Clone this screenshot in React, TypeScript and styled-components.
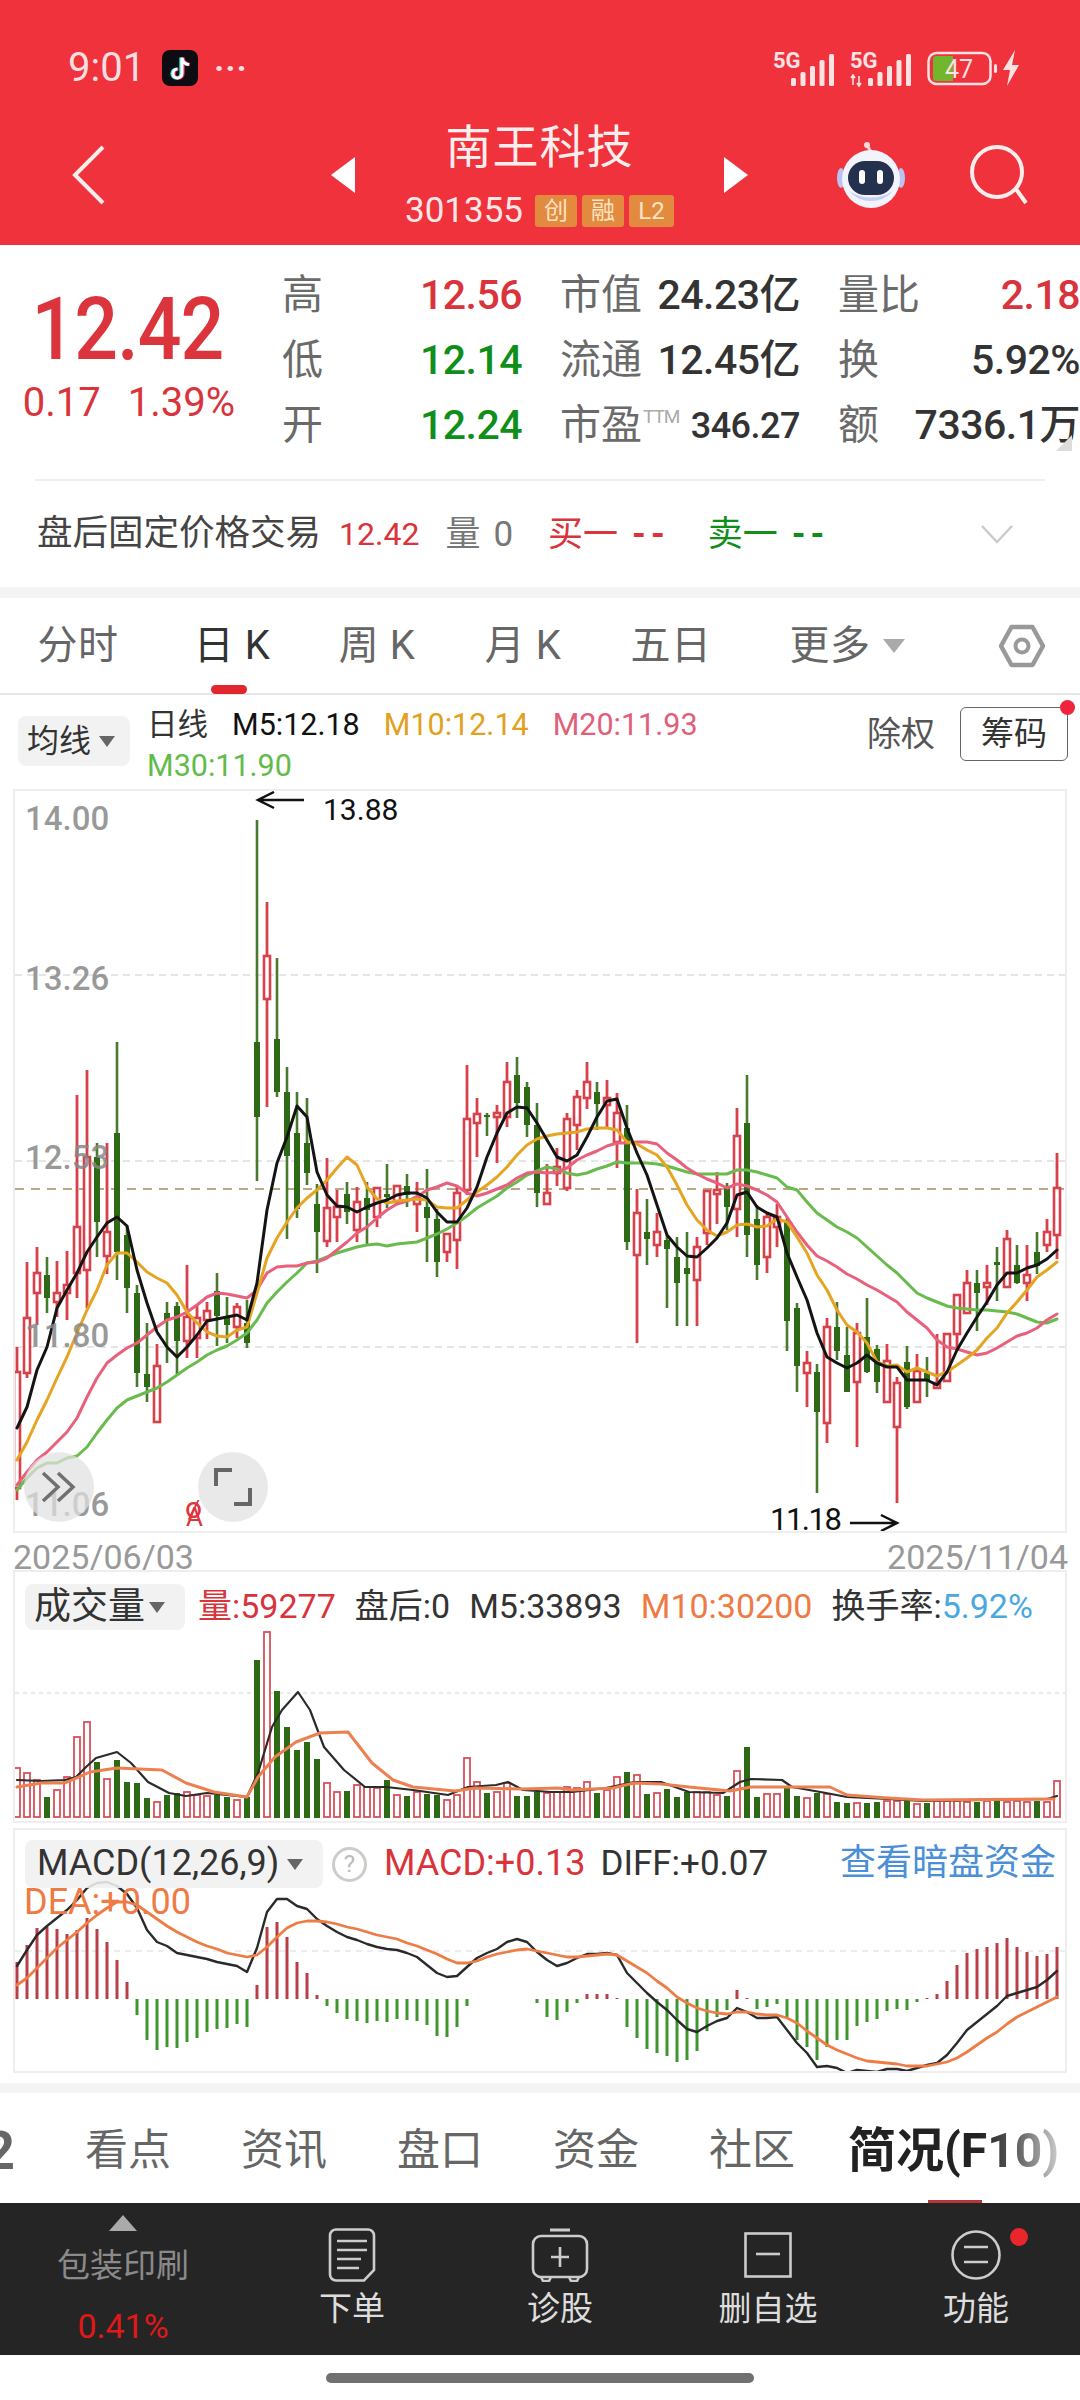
import styled, { createGlobalStyle } from "styled-components";

const SANS = `Roboto, "Noto Sans CJK SC", sans-serif`;
const RED = "#d9333b";
const GREEN = "#0f8f1a";

const GlobalStyle = createGlobalStyle`
  html, body { margin: 0; padding: 0; background: #fff; }
  #root { width: 1080px; height: 2400px; overflow: hidden; }
  * { box-sizing: border-box; }
`;

/* candles: up, high, body top, body bottom, low (page px) */
const candles: [number, number, number, number, number][] = [
  [1,1347,1372,1488,1500],[1,1262,1318,1373,1378],[1,1247,1273,1293,1325],[0,1257,1275,1298,1313],[1,1261,1293,1302,1317],
  [1,1251,1285,1293,1320],[1,1095,1227,1273,1298],[1,1070,1157,1270,1308],[0,1143,1157,1222,1257],[1,1143,1232,1256,1274],
  [0,1042,1133,1252,1280],[0,1225,1235,1288,1313],[0,1285,1293,1373,1387],[0,1323,1374,1387,1402],[1,1344,1366,1422,1422],
  [0,1302,1313,1320,1363],[0,1302,1306,1341,1374],[1,1265,1317,1341,1358],[1,1305,1318,1338,1358],[1,1302,1311,1320,1339],
  [0,1273,1291,1316,1346],[0,1297,1317,1325,1343],[1,1303,1307,1327,1338],[0,1300,1323,1343,1348],[0,820,1042,1117,1181],
  [1,902,956,999,1107],[0,958,1039,1092,1097],[0,1067,1092,1156,1239],[0,1092,1133,1209,1218],[0,1098,1143,1173,1185],
  [0,1184,1204,1232,1273],[1,1158,1208,1241,1247],[1,1190,1207,1217,1242],[0,1182,1194,1212,1224],[1,1187,1202,1230,1242],
  [0,1182,1198,1210,1245],[1,1187,1188,1217,1227],[0,1164,1194,1197,1208],[1,1185,1186,1202,1205],[0,1174,1186,1195,1207],
  [1,1182,1198,1204,1232],[0,1169,1207,1218,1262],[0,1209,1219,1262,1277],[1,1233,1234,1252,1262],[1,1187,1193,1240,1269],
  [1,1065,1119,1190,1195],[1,1098,1114,1123,1157],[0,1113,1115,1117,1136],[1,1105,1113,1117,1163],[1,1062,1082,1117,1127],
  [0,1057,1075,1103,1118],[0,1082,1087,1125,1137],[0,1103,1125,1193,1207],[1,1164,1193,1204,1204],[1,1148,1167,1173,1186],
  [1,1113,1119,1188,1191],[1,1090,1097,1125,1150],[1,1062,1082,1098,1109],[0,1082,1092,1104,1130],[1,1080,1098,1105,1128],
  [1,1093,1113,1142,1168],[0,1105,1128,1242,1250],[1,1189,1213,1255,1343],[0,1199,1232,1239,1265],[1,1213,1232,1245,1257],
  [0,1235,1240,1249,1308],[0,1237,1257,1283,1326],[0,1232,1268,1274,1326],[1,1237,1247,1280,1326],[1,1190,1191,1233,1245],
  [1,1172,1190,1194,1224],[0,1183,1188,1207,1230],[1,1108,1136,1209,1237],[0,1075,1123,1235,1257],[0,1205,1219,1265,1280],
  [1,1212,1217,1257,1273],[1,1204,1217,1227,1247],[0,1218,1220,1321,1351],[0,1303,1308,1366,1392],[1,1351,1363,1373,1407],
  [0,1364,1372,1412,1493],[1,1318,1327,1423,1443],[0,1302,1327,1351,1360],[0,1327,1355,1392,1392],[1,1323,1333,1382,1447],
  [0,1298,1337,1372,1373],[0,1345,1349,1382,1393],[1,1344,1361,1402,1402],[1,1377,1383,1427,1503],[0,1346,1362,1407,1409],
  [1,1354,1371,1402,1402],[0,1357,1373,1380,1397],[1,1334,1383,1388,1389],[1,1333,1334,1381,1382],[1,1294,1295,1334,1350],
  [1,1270,1283,1313,1313],[0,1270,1283,1293,1331],[1,1265,1283,1287,1305],[0,1247,1262,1265,1301],[1,1230,1239,1287,1287],
  [0,1245,1265,1283,1284],[1,1245,1275,1283,1301],[0,1232,1252,1266,1274],[1,1219,1232,1245,1252],[1,1153,1188,1235,1259],
];

const ma5 = [1428,1407,1370,1347,1308,1290,1273,1252,1237,1223,1217,1226,1270,1303,1332,1347,1357,1347,1335,1321,1319,1317,1315,1320,1283,1210,1163,1137,1106,1117,1172,1195,1206,1207,1212,1207,1203,1200,1195,1193,1193,1198,1212,1222,1222,1208,1187,1157,1133,1113,1107,1108,1123,1140,1157,1161,1155,1137,1117,1101,1099,1128,1153,1175,1205,1235,1247,1256,1257,1248,1238,1223,1195,1192,1207,1213,1217,1253,1277,1300,1333,1357,1363,1368,1363,1355,1363,1367,1367,1380,1380,1380,1385,1372,1350,1333,1317,1302,1285,1273,1273,1268,1265,1259,1250];
const ma10 = [1460,1442,1420,1400,1378,1357,1333,1310,1290,1265,1253,1253,1262,1272,1278,1283,1295,1312,1323,1332,1336,1337,1330,1327,1293,1258,1238,1222,1208,1198,1190,1180,1168,1157,1165,1187,1199,1203,1201,1200,1199,1200,1207,1208,1208,1200,1192,1185,1177,1167,1155,1145,1139,1136,1134,1133,1132,1129,1128,1128,1130,1142,1144,1150,1155,1167,1185,1205,1220,1230,1236,1232,1225,1224,1227,1226,1219,1222,1237,1253,1275,1290,1310,1325,1332,1343,1362,1366,1365,1372,1368,1372,1376,1372,1365,1358,1350,1338,1328,1313,1302,1290,1277,1270,1262];
const ma20 = [1485,1472,1460,1452,1442,1432,1418,1397,1378,1363,1355,1348,1343,1335,1327,1320,1317,1312,1305,1297,1293,1294,1296,1298,1290,1273,1267,1266,1266,1263,1262,1258,1250,1242,1233,1227,1218,1210,1204,1201,1197,1190,1187,1183,1186,1193,1196,1193,1189,1185,1178,1173,1172,1173,1172,1168,1160,1155,1151,1146,1143,1143,1142,1142,1144,1153,1160,1168,1174,1179,1183,1188,1184,1186,1190,1195,1202,1217,1232,1245,1256,1261,1267,1274,1279,1285,1290,1296,1302,1312,1320,1328,1340,1347,1349,1352,1355,1353,1348,1342,1336,1333,1328,1320,1314];
const ma30 = [1490,1478,1468,1463,1463,1458,1456,1447,1433,1420,1408,1400,1396,1392,1388,1382,1375,1368,1362,1355,1350,1346,1340,1333,1320,1303,1292,1282,1273,1263,1261,1257,1253,1250,1247,1245,1244,1246,1244,1243,1242,1238,1234,1229,1223,1216,1208,1202,1196,1188,1182,1175,1171,1167,1169,1173,1175,1173,1169,1166,1162,1163,1163,1163,1164,1166,1169,1172,1174,1174,1174,1174,1170,1170,1172,1175,1178,1187,1190,1202,1213,1220,1227,1232,1238,1247,1256,1265,1273,1283,1293,1298,1302,1306,1308,1309,1310,1310,1311,1312,1314,1318,1322,1323,1319];

/* volume bar tops, page px */
const volTops = [1768,1773,1780,1797,1790,1777,1737,1722,1762,1779,1760,1782,1783,1798,1802,1795,1793,1792,1795,1796,1795,1797,1800,1797,1660,1632,1691,1727,1750,1742,1759,1783,1792,1791,1785,1787,1788,1780,1795,1796,1792,1794,1795,1800,1795,1758,1782,1793,1792,1783,1796,1796,1792,1793,1792,1787,1788,1782,1793,1790,1777,1772,1775,1794,1793,1789,1797,1792,1792,1792,1795,1796,1771,1747,1797,1794,1794,1787,1796,1798,1793,1794,1802,1803,1803,1803,1802,1801,1801,1801,1804,1803,1801,1801,1801,1802,1802,1801,1801,1802,1801,1802,1801,1802,1781];
const volUp = [1,1,1,0,1,1,1,1,0,1,0,0,0,0,1,0,0,1,1,1,0,0,1,0,0,1,0,0,0,0,0,1,1,0,1,1,1,0,1,0,1,0,0,1,1,1,1,0,1,1,0,0,0,1,1,1,1,1,0,1,1,0,1,0,1,0,0,0,1,1,1,0,1,0,0,1,1,0,0,1,0,1,0,0,1,0,0,1,1,0,1,0,1,1,1,1,0,1,0,1,1,1,0,1,1];
const volM5 = "17,1780 41,1781 65,1780 76,1777 86,1767 96,1758 117,1752 131,1763 148,1782 169,1793 186,1796 207,1793 227,1795 247,1797 258,1773 272,1727 282,1710 298,1692 310,1710 324,1747 344,1770 365,1787 386,1787 413,1790 448,1795 468,1787 496,1785 508,1782 523,1790 551,1792 572,1792 606,1788 634,1782 661,1782 689,1792 723,1793 740,1782 751,1779 782,1780 792,1787 826,1793 847,1797 888,1799 923,1801 1047,1799 1057,1796";
const volM10 = "17,1787 41,1783 65,1783 90,1772 117,1768 162,1770 186,1783 214,1792 247,1797 258,1777 275,1757 296,1742 320,1733 348,1732 372,1763 393,1780 413,1787 455,1791 475,1788 523,1789 558,1788 572,1790 613,1788 634,1783 661,1784 689,1787 730,1791 751,1787 785,1787 830,1787 847,1795 888,1798 923,1800 1054,1799";

/* macd: bar tops and lines, page px, zero at 1999 */
const macdTops = [1962,1945,1928,1927,1929,1934,1930,1918,1929,1942,1960,1982,2015,2040,2050,2047,2048,2042,2038,2032,2029,2028,2024,2027,1985,1927,1922,1937,1962,1973,1995,2006,2013,2019,2021,2023,2021,2022,2019,2020,2021,2025,2036,2037,2027,2006,1999,1999,1999,1999,1999,1999,2003,2017,2020,2012,2003,1994,1994,1994,1998,2027,2038,2049,2053,2056,2062,2060,2051,2031,2017,2010,1990,1998,2009,2007,2004,2017,2040,2047,2060,2047,2040,2040,2026,2022,2019,2011,2009,2010,2002,1998,1994,1981,1965,1953,1949,1947,1943,1938,1947,1952,1956,1954,1947];
const macdDiff = [1966,1950,1935,1926,1918,1910,1900,1888,1883,1882,1886,1894,1908,1930,1942,1946,1953,1955,1957,1959,1962,1964,1966,1972,1948,1912,1899,1899,1906,1909,1919,1926,1932,1937,1940,1944,1947,1949,1950,1953,1957,1965,1973,1977,1976,1967,1958,1953,1949,1942,1939,1942,1952,1960,1966,1963,1958,1954,1954,1953,1955,1973,1983,1993,2002,2010,2020,2029,2032,2026,2021,2018,2008,2012,2018,2018,2017,2030,2043,2053,2067,2066,2068,2073,2070,2071,2072,2069,2069,2071,2068,2065,2063,2055,2043,2030,2022,2014,2006,1996,1993,1990,1987,1980,1971];
const macdDea = [1985,1978,1968,1958,1948,1940,1932,1923,1915,1908,1902,1902,1905,1912,1919,1926,1932,1937,1942,1946,1949,1953,1955,1957,1955,1947,1937,1928,1923,1921,1921,1922,1924,1927,1929,1932,1935,1937,1939,1943,1946,1950,1954,1959,1963,1963,1961,1957,1954,1952,1950,1949,1951,1953,1955,1957,1957,1956,1955,1954,1955,1961,1967,1973,1981,1988,1997,2003,2008,2011,2013,2014,2012,2012,2014,2015,2015,2018,2023,2031,2038,2045,2050,2054,2058,2061,2062,2063,2064,2066,2066,2066,2064,2062,2058,2052,2045,2038,2032,2024,2017,2012,2007,2002,1997];

const xAt = (i: number) => 17 + i * 10;
const toPoints = (ys: number[]) => ys.map((y, i) => `${xAt(i)},${y}`).join(" ");

const Page = styled.div`
  width: 1080px;
  height: 2400px;
  background: #fff;
  font-family: ${SANS};
  line-height: 1.2;
  color: #333;
  display: flex;
  flex-direction: column;
`;

const Header = styled.header`
  height: 245px;
  background: #f0323c;
  color: #fff;
  padding-top: 48px;
`;

const StatusBar = styled.div`
  height: 40px;
  display: flex;
  align-items: center;
  padding: 0 61px 0 68px;
`;

const Time = styled.span`
  font-size: 40px;
  color: #f7dfe0;
  width: 94px;
`;

const Dots = styled.span`
  margin-left: 16px;
  font-size: 34px;
  font-weight: 700;
  letter-spacing: 1px;
  color: #f7dfe0;
  line-height: 24px;
`;

const StatusRight = styled.div`
  margin-left: auto;
  display: flex;
  align-items: center;
  gap: 13px;
`;

const Nav = styled.div`
  display: grid;
  grid-template-columns: 331px 24px 369px 24px 222px 110px;
  align-items: center;
  margin-top: 34px;
`;

const BackCell = styled.div`
  padding-left: 70px;
  display: flex;
`;

const RobotCell = styled.div`
  padding-left: 88px;
  display: flex;
`;

const TitleBlock = styled.div`
  display: flex;
  flex-direction: column;
  align-items: center;
  gap: 26px;
`;

const Title = styled.div`
  font-size: 46px;
  line-height: 46px;
  letter-spacing: 1px;
  color: #fdeeee;
  padding-top: 2px;
`;

const CodeRow = styled.div`
  display: flex;
  align-items: center;
  height: 34px;
  gap: 5px;
  margin-top: -2px;
`;

const Code = styled.span`
  font-size: 35px;
  color: #fbe7e7;
  margin-right: 7px;
`;

const Tag = styled.span<{ $w: number }>`
  width: ${(p) => p.$w}px;
  height: 32px;
  background: #e28b3f;
  color: #fbe3c4;
  border-radius: 3px;
  font-size: 24px;
  display: flex;
  align-items: center;
  justify-content: center;
`;

const Quote = styled.section`
  height: 234px;
  display: flex;
  position: relative;
`;

const PriceBox = styled.div`
  width: 282px;
  padding-top: 42px;
  display: flex;
  flex-direction: column;
  align-items: center;
  padding-right: 24px;
`;

const BigPrice = styled.div`
  font-size: 87px;
  line-height: 84px;
  font-weight: 500;
  letter-spacing: -1px;
  color: #dc343c;
  transform: scaleX(0.885);
  margin-left: -4px;
`;

const ChangeRow = styled.div`
  margin-top: 10px;
  display: flex;
  gap: 27px;
  font-size: 40px;
  line-height: 44px;
  color: ${RED};
`;

const QuoteGrid = styled.div`
  padding-top: 18px;
  display: grid;
  grid-template-columns: 240px 240px 242px;
  grid-auto-rows: 65px;
  column-gap: 38px;
`;

const Cell = styled.div`
  display: flex;
  align-items: center;
  justify-content: space-between;
  white-space: nowrap;
  line-height: 1;
`;

const CellLabel = styled.span`
  font-size: 41px;
  color: #6a6a6a;
  display: flex;
  align-items: flex-start;
`;

const Ttm = styled.sup`
  font-size: 19px;
  line-height: 24px;
  letter-spacing: -1px;
  margin-left: 1px;
  color: #aaa;
`;

const CellValue = styled.span<{ $c?: string; $s?: number }>`
  font-size: ${(p) => p.$s || 41}px;
  font-weight: 500;
  letter-spacing: -0.5px;
  color: ${(p) => p.$c || "#333"};
`;

const Corner = styled.div`
  position: absolute;
  right: 8px;
  bottom: 28px;
  width: 0;
  height: 0;
  border-left: 16px solid transparent;
  border-bottom: 16px solid #ddd;
`;

const Divider = styled.div`
  height: 2px;
  margin: 0 35px;
  background: #eee;
`;

const AfterRow = styled.div`
  height: 106px;
  padding-left: 37px;
  display: flex;
  align-items: center;
  font-size: 35.5px;
  line-height: 1;
  color: #444;
  white-space: nowrap;
`;

const AfterText = styled.span<{ $c?: string; $ml: number; $s?: number; $dash?: boolean }>`
  margin-left: ${(p) => p.$ml}px;
  color: ${(p) => p.$c || "#444"};
  font-size: ${(p) => p.$s || 35}px;
  font-weight: ${(p) => (p.$dash ? 700 : 400)};
  letter-spacing: ${(p) => (p.$dash ? 5 : 0)}px;
`;

const AfterChevron = styled.svg`
  position: absolute;
  left: 980px;
`;

const Band = styled.div<{ $h: number; $mt?: number }>`
  height: ${(p) => p.$h}px;
  margin-top: ${(p) => p.$mt || 0}px;
  background: #f4f4f4;
  flex: none;
`;

const PeriodTabs = styled.nav`
  height: 97px;
  display: grid;
  grid-template-columns: 156px 152px 138px 154px 142px 210px 1fr;
  border-bottom: 2px solid #e6e6e6;
  position: relative;
`;

const Period = styled.div<{ $active?: boolean }>`
  display: flex;
  align-items: center;
  justify-content: center;
  gap: 12px;
  font-size: 40px;
  color: ${(p) => (p.$active ? "#333" : "#666")};
  letter-spacing: 0.5px;
  position: relative;

  ${(p) =>
    p.$active &&
    `&::after {
      content: "";
      position: absolute;
      bottom: -1px;
      left: 55px;
      width: 36px;
      height: 9px;
      border-radius: 5px;
      background: #e3262e;
    }`}
`;

const HexCell = styled.div`
  display: flex;
  align-items: center;
  justify-content: center;
  padding-left: 12px;
`;

const LegendRow = styled.div`
  height: 94px;
  display: flex;
  align-items: flex-start;
  position: relative;
  padding-left: 18px;
`;

const SelectButton = styled.div`
  display: flex;
  align-items: center;
  background: rgba(240, 240, 240, 0.88);
  border-radius: 8px;
  color: #333;
  flex: none;
`;

const AvgButton = styled(SelectButton)`
  width: 112px;
  height: 50px;
  margin-top: 21px;
  padding-left: 9px;
  font-size: 32px;
  gap: 8px;
`;

const Caret = styled.span<{ $c?: string; $s?: number }>`
  width: 0;
  height: 0;
  border-left: ${(p) => p.$s || 8}px solid transparent;
  border-right: ${(p) => p.$s || 8}px solid transparent;
  border-top: ${(p) => (p.$s || 8) + 3}px solid ${(p) => p.$c || "#666"};
  flex: none;
`;

const MaList = styled.div`
  margin-left: 17px;
  padding-top: 9px;
  width: 580px;
  display: flex;
  flex-wrap: wrap;
  column-gap: 24px;
  line-height: 41px;
  font-size: 30.5px;
`;

const MaText = styled.span<{ $c: string }>`
  color: ${(p) => p.$c};
  white-space: nowrap;
`;

const MaRight = styled.div`
  margin-left: auto;
  display: flex;
  align-items: flex-start;
  padding-right: 12px;
  padding-top: 12px;
  gap: 25px;
`;

const ExRight = styled.span`
  font-size: 34px;
  line-height: 54px;
  color: #555;
`;

const ChipButton = styled.div`
  width: 108px;
  height: 54px;
  border: 1px solid #666;
  border-radius: 6px;
  font-size: 33px;
  color: #333;
  display: flex;
  align-items: center;
  justify-content: center;
  position: relative;

  &::after {
    content: "";
    position: absolute;
    top: -8px;
    right: -8px;
    width: 15px;
    height: 15px;
    border-radius: 50%;
    background: #f0243c;
  }
`;

const ChartFrame = styled.div<{ $h: number; $mt?: number }>`
  position: relative;
  width: 1054px;
  height: ${(p) => p.$h}px;
  margin: ${(p) => p.$mt || 0}px 0 0 13px;
  border: 2px solid #eee;
  flex: none;
`;

const ChartSvg = styled.svg`
  display: block;
`;

const PriceLabel = styled.span<{ $top: number }>`
  position: absolute;
  left: 10px;
  top: ${(p) => p.$top}px;
  font-size: 33px;
  line-height: 40px;
  font-weight: 500;
  color: rgba(135, 135, 135, 0.85);
`;

const RoundButton = styled.div<{ $left: number }>`
  position: absolute;
  left: ${(p) => p.$left}px;
  top: 661px;
  width: 70px;
  height: 70px;
  border-radius: 50%;
  background: rgba(224, 224, 224, 0.72);
  display: flex;
  align-items: center;
  justify-content: center;
`;

const DateRow = styled.div`
  height: 37px;
  padding: 6px 12px 0 13px;
  display: flex;
  justify-content: space-between;
  align-items: flex-start;
  font-size: 34px;
  line-height: 36px;
  color: #999;
  flex: none;
`;

const PanelLegend = styled.div<{ $top: number }>`
  position: absolute;
  left: 10px;
  top: ${(p) => p.$top}px;
  right: 8px;
  display: flex;
  align-items: center;
  gap: 19px;
  font-size: 34px;
  line-height: 1.1;
  white-space: nowrap;
`;

const VolButton = styled(SelectButton)`
  width: 160px;
  height: 46px;
  padding-left: 9px;
  margin-right: -6px;
  font-size: 37px;
  gap: 4px;
`;

const MacdButton = styled(SelectButton)`
  width: 298px;
  height: 48px;
  padding-left: 12px;
  font-size: 36px;
  gap: 8px;
  margin-right: -10px;
`;

const LegendText = styled.span<{ $c?: string; $s?: number; $ml?: number }>`
  color: ${(p) => p.$c || "#333"};
  font-size: ${(p) => p.$s || 34}px;
  margin-left: ${(p) => p.$ml || 0}px;
`;

const Help = styled.span`
  width: 35px;
  height: 35px;
  border: 3px solid #ccc;
  border-radius: 50%;
  color: #bbb;
  font-size: 24px;
  display: flex;
  align-items: center;
  justify-content: center;
  margin-right: -2px;
`;

const DarkLink = styled.span`
  margin-left: auto;
  font-size: 36px;
  color: #4a8fd8;
  margin-right: 1px;
`;

const DeaText = styled.span`
  position: absolute;
  left: 9px;
  top: 52px;
  font-size: 36px;
  line-height: 40px;
  color: #ee7a45;
`;

const InfoTabs = styled.nav`
  height: 110px;
  padding-top: 6px;
  display: flex;
  align-items: center;
  gap: 70px;
  position: relative;
  flex: none;
  font-size: 43px;
  line-height: 1.2;
  color: #666;
  white-space: nowrap;
  overflow: hidden;
`;

const ClippedTab = styled.div`
  width: 15px;
  overflow: hidden;
  display: flex;
  justify-content: flex-end;
  font-size: 54px;
  font-weight: 700;
`;

const ActiveInfoTab = styled.span`
  margin-left: -17px;
  font-size: 48px;
  font-weight: 700;
  background: linear-gradient(90deg, #222 62%, #555 78%, #ccc 100%);
  -webkit-background-clip: text;
  background-clip: text;
  -webkit-text-fill-color: transparent;

  &::after {
    content: "";
    position: absolute;
    left: 928px;
    bottom: 0;
    width: 54px;
    height: 3px;
    background: #b8353a;
  }
`;

const BottomBar = styled.footer`
  height: 152px;
  background: #252525;
  display: grid;
  grid-template-columns: 248px repeat(4, 208px);
  flex: none;
`;

const SectorCell = styled.div`
  display: flex;
  flex-direction: column;
  align-items: center;
  padding: 12px 0 0 0;
  margin-left: -2px;
`;

const UpTriangle = styled.div`
  width: 0;
  height: 0;
  border-left: 14px solid transparent;
  border-right: 14px solid transparent;
  border-bottom: 16px solid #aaa;
`;

const SectorName = styled.div`
  margin-top: 15px;
  font-size: 33px;
  line-height: 40px;
  color: #8a8a8a;
`;

const SectorPct = styled.div`
  margin-top: 20px;
  font-size: 34px;
  line-height: 40px;
  color: #e01818;
`;

const BarItem = styled.div`
  display: flex;
  flex-direction: column;
  align-items: center;
  padding-top: 25px;
  position: relative;
`;

const BarIcon = styled.div`
  height: 54px;
  display: flex;
  align-items: center;
  justify-content: center;
`;

const BarLabel = styled.div`
  margin-top: 7px;
  font-size: 33px;
  line-height: 40px;
  color: #ddd;
`;

const RedDot = styled.span`
  position: absolute;
  top: 25px;
  left: 138px;
  width: 18px;
  height: 18px;
  border-radius: 50%;
  background: #e8262c;
`;

const HomeArea = styled.div`
  flex: 1;
  display: flex;
  justify-content: center;
  padding-top: 18px;
`;

const HomeHandle = styled.div`
  width: 428px;
  height: 10px;
  border-radius: 5px;
  background: #707070;
`;

function Signal({ arrows }: { arrows?: boolean }) {
  const bars = [8, 14, 20, 26, 32];
  return (
    <svg width="64" height="40" viewBox="0 0 64 40">
      <text x="0" y="20" fontSize="22" fontWeight="700" fontFamily="Roboto" fill="#fbe3e4">5G</text>
      {arrows && <path d="M3 28v9M1 30l2-3 2 3M9 28v9M7 35l2 3 2-3" stroke="#fbe3e4" strokeWidth="1.6" fill="none" />}
      {bars.map((h, i) => (
        <rect key={i} x={18 + i * 9.5} y={38 - h} width="5" height={h} rx="1.5" fill="#fbe3e4" />
      ))}
    </svg>
  );
}

function Candles() {
  return (
    <>
      {candles.map(([up, hi, top, bot, lo], i) => {
        const x = xAt(i);
        if (up) {
          return (
            <g key={i}>
              <line x1={x} x2={x} y1={hi} y2={lo} stroke="#d8404a" strokeWidth="2.8" />
              <rect x={x - 3} y={top} width="6" height={Math.max(bot - top, 2)} fill="#fff" stroke="#d8404a" strokeWidth="2.6" />
            </g>
          );
        }
        return (
          <g key={i}>
            <line x1={x} x2={x} y1={hi} y2={lo} stroke="#477a2c" strokeWidth="2.6" />
            <rect x={x - 3} y={top} width="6" height={Math.max(bot - top, 2)} fill="#2e6a16" />
          </g>
        );
      })}
    </>
  );
}

const Line = ({ pts, c, w = 3 }: { pts: string; c: string; w?: number }) => (
  <polyline points={pts} fill="none" stroke={c} strokeWidth={w} strokeLinejoin="round" strokeLinecap="round" />
);

export default function App() {
  return (
    <Page>
      <GlobalStyle />
      <Header>
        <StatusBar>
          <Time>9:01</Time>
          <svg width="36" height="36" viewBox="0 0 36 36">
            <rect width="36" height="36" rx="8" fill="#0c0c12" />
            <path d="M20 7v16a4.5 4.5 0 1 1-4.5-4.5M20 7c.5 4 3 6.5 7 7" fill="none" stroke="#25e6e0" strokeWidth="3.4" transform="translate(-1 .6)" />
            <path d="M20 7v16a4.5 4.5 0 1 1-4.5-4.5M20 7c.5 4 3 6.5 7 7" fill="none" stroke="#f0245c" strokeWidth="3.4" transform="translate(1 .6)" />
            <path d="M20 7v16a4.5 4.5 0 1 1-4.5-4.5M20 7c.5 4 3 6.5 7 7" fill="none" stroke="#fff" strokeWidth="3" transform="translate(0 .6)" />
          </svg>
          <Dots>···</Dots>
          <StatusRight>
            <Signal />
            <Signal arrows />
            <svg width="92" height="36" viewBox="0 0 92 36">
              <rect x="1.5" y="3" width="62" height="31" rx="8" fill="none" stroke="#fbe3e4" strokeWidth="2.5" />
              <path d="M6 9a3 3 0 0 1 3-3h17v25H9a3 3 0 0 1-3-3z" fill="#72b62e" />
              <text x="32" y="28" textAnchor="middle" fontSize="25" fontFamily="Roboto" fill="#fbe3e4">47</text>
              <rect x="67" y="14" width="3" height="9" rx="1.5" fill="#fbe3e4" />
              <path d="M88 0 76 20h7l-3 16 12-21h-7z" fill="#fbe3e4" />
            </svg>
          </StatusRight>
        </StatusBar>
        <Nav>
          <BackCell>
            <svg width="36" height="62" viewBox="0 0 36 62">
              <path d="M33 3 5 31l28 28" fill="none" stroke="#fdeeee" strokeWidth="4" />
            </svg>
          </BackCell>
          <svg width="24" height="36" viewBox="0 0 24 36"><path d="M24 0v36L0 18z" fill="#fff" /></svg>
          <TitleBlock>
            <Title>南王科技</Title>
            <CodeRow>
              <Code>301355</Code>
              <Tag $w={42}>创</Tag>
              <Tag $w={42}>融</Tag>
              <Tag $w={45}>L2</Tag>
            </CodeRow>
          </TitleBlock>
          <svg width="24" height="36" viewBox="0 0 24 36"><path d="M0 0v36l24-18z" fill="#fff" /></svg>
          <RobotCell>
            <svg width="70" height="66" viewBox="0 0 70 66">
              <path d="M35 10C33 6 31 5 31 2" stroke="#f4cfd0" strokeWidth="3" fill="none" />
              <circle cx="31" cy="3" r="3" fill="#f9d9da" />
              <ellipse cx="5" cy="36" rx="4" ry="10" fill="#b9c2f0" />
              <ellipse cx="65" cy="36" rx="4" ry="10" fill="#b9c2f0" />
              <circle cx="35" cy="37" r="29" fill="#f2f3fb" />
              <path d="M13 49a29 29 0 0 0 44 0 40 40 0 0 1-44 0z" fill="#c5cdf5" />
              <rect x="12" y="19" width="46" height="34" rx="17" fill="#23304e" />
              <rect x="23" y="28" width="6" height="14" rx="3" fill="#fff" />
              <rect x="41" y="28" width="6" height="14" rx="3" fill="#fff" />
            </svg>
          </RobotCell>
          <svg width="60" height="60" viewBox="0 0 60 60">
            <circle cx="27" cy="27" r="25" fill="none" stroke="#fdeeee" strokeWidth="4" />
            <path d="M46 44l10 14" stroke="#fdeeee" strokeWidth="4" fill="none" />
          </svg>
        </Nav>
      </Header>

      <Quote>
        <PriceBox>
          <BigPrice>12.42</BigPrice>
          <ChangeRow>
            <span>0.17</span>
            <span>1.39%</span>
          </ChangeRow>
        </PriceBox>
        <QuoteGrid>
          <Cell><CellLabel>高</CellLabel><CellValue $c={RED}>12.56</CellValue></Cell>
          <Cell><CellLabel>市值</CellLabel><CellValue>24.23亿</CellValue></Cell>
          <Cell><CellLabel>量比</CellLabel><CellValue $c={RED}>2.18</CellValue></Cell>
          <Cell><CellLabel>低</CellLabel><CellValue $c={GREEN}>12.14</CellValue></Cell>
          <Cell><CellLabel>流通</CellLabel><CellValue>12.45亿</CellValue></Cell>
          <Cell><CellLabel>换</CellLabel><CellValue>5.92%</CellValue></Cell>
          <Cell><CellLabel>开</CellLabel><CellValue $c={GREEN}>12.24</CellValue></Cell>
          <Cell><CellLabel>市盈<Ttm>TTM</Ttm></CellLabel><CellValue $s={36}>346.27</CellValue></Cell>
          <Cell><CellLabel>额</CellLabel><CellValue>7336.1万</CellValue></Cell>
        </QuoteGrid>
        <Corner />
      </Quote>
      <Divider />
      <AfterRow>
        <span>盘后固定价格交易</span>
        <AfterText $c={RED} $ml={18} $s={32}>12.42</AfterText>
        <AfterText $c="#777" $ml={26}>量</AfterText>
        <AfterText $c="#777" $ml={13}>0</AfterText>
        <AfterText $c={RED} $ml={35}>买一</AfterText>
        <AfterText $c={RED} $ml={14} $dash>--</AfterText>
        <AfterText $c={GREEN} $ml={38}>卖一</AfterText>
        <AfterText $c={GREEN} $ml={14} $dash>--</AfterText>
        <AfterChevron width="34" height="20" viewBox="0 0 34 20">
          <path d="M2 2l15 16L32 2" fill="none" stroke="#ccc" strokeWidth="2.5" />
        </AfterChevron>
      </AfterRow>
      <Band $h={11} />

      <PeriodTabs>
        <Period>分时</Period>
        <Period $active>日 K</Period>
        <Period>周 K</Period>
        <Period>月 K</Period>
        <Period>五日</Period>
        <Period>更多<Caret $c="#aaa" $s={11} /></Period>
        <HexCell>
          <svg width="46" height="44" viewBox="0 0 46 44">
            <path d="M12.5 3h21L44 22 33.500 41h-21L2 22z" fill="none" stroke="#999" strokeWidth="4.5" strokeLinejoin="round" />
            <circle cx="23" cy="22" r="6.500" fill="none" stroke="#999" strokeWidth="4" />
          </svg>
        </HexCell>
      </PeriodTabs>

      <LegendRow>
        <AvgButton>均线<Caret /></AvgButton>
        <MaList>
          <MaText $c="#333">日线</MaText>
          <MaText $c="#111">M5:12.18</MaText>
          <MaText $c="#e3a020">M10:12.14</MaText>
          <MaText $c="#e0607a">M20:11.93</MaText>
          <MaText $c="#62bb4a">M30:11.90</MaText>
        </MaList>
        <MaRight>
          <ExRight>除权</ExRight>
          <ChipButton>筹码</ChipButton>
        </MaRight>
      </LegendRow>

      <ChartFrame $h={744}>
        <ChartSvg width="1050" height="740" viewBox="15 791 1050 740">
          {[975, 1161, 1347].map((y) => (
            <line key={y} x1="15" x2="1065" y1={y} y2={y} stroke="#ddd" strokeWidth="1.5" strokeDasharray="7 5" />
          ))}
          <line x1="15" x2="1065" y1="1189" y2="1189" stroke="#bda684" strokeWidth="2" strokeDasharray="9 7" />
          <Candles />
          <Line pts={toPoints(ma30)} c="#68bb4c" />
          <Line pts={toPoints(ma20)} c="#e9607c" />
          <Line pts={toPoints(ma10)} c="#e5a421" />
          <Line pts={toPoints(ma5)} c="#141414" />
          <path d="M304 800H258M274 792l-16 8 16 8" fill="none" stroke="#111" strokeWidth="2.5" />
          <text x="323" y="820" fontSize="30" fontFamily="Roboto" fill="#111">13.88</text>
          <text x="770" y="1530" fontSize="31" fontFamily="Roboto" letterSpacing="-1.5" fill="#111">11.18</text>
          <path d="M850 1523H897M881 1515l16 8-16 8" fill="none" stroke="#111" strokeWidth="2.5" />
          <text x="186" y="1526" fontSize="26" fontFamily="Roboto" fill="#e0343c">A</text>
          <text x="185" y="1518" fontSize="30" fontFamily="Roboto" fill="#e0343c">ø</text>
        </ChartSvg>
        <PriceLabel $top={8}>14.00</PriceLabel>
        <PriceLabel $top={168}>13.26</PriceLabel>
        <PriceLabel $top={347}>12.53</PriceLabel>
        <PriceLabel $top={525}>11.80</PriceLabel>
        <PriceLabel $top={694}>11.06</PriceLabel>
        <RoundButton $left={9}>
          <svg width="36" height="32" viewBox="0 0 36 32">
            <path d="M2 2l15 14L2 30M17 2l15 14-15 14" fill="none" stroke="#707070" strokeWidth="3.500" />
          </svg>
        </RoundButton>
        <RoundButton $left={183}>
          <svg width="38" height="38" viewBox="0 0 38 38">
            <path d="M2 18V2h16M36 20v16H20" fill="none" stroke="#666" strokeWidth="4" />
          </svg>
        </RoundButton>
      </ChartFrame>
      <DateRow>
        <span>2025/06/03</span>
        <span>2025/11/04</span>
      </DateRow>

      <ChartFrame $h={253}>
        <ChartSvg width="1050" height="249" viewBox="15 1572 1050 249">
          <line x1="15" x2="1065" y1="1693" y2="1693" stroke="#e2e2e2" strokeWidth="1.5" strokeDasharray="4 4" />
          {volTops.map((top, i) =>
            volUp[i] ? (
              <rect key={i} x={xAt(i) - 3} y={top} width="6" height={1817 - top} fill="#fff" stroke="#d8505a" strokeWidth="1.8" />
            ) : (
              <rect key={i} x={xAt(i) - 3} y={top} width="6" height={1818 - top} fill="#2e6a16" />
            )
          )}
          <Line pts={volM5} c="#2b2b2b" w={2.2} />
          <Line pts={volM10} c="#ec8050" w={3} />
        </ChartSvg>
        <PanelLegend $top={12}>
          <VolButton>成交量<Caret /></VolButton>
          <LegendText $c={RED}>量:59277</LegendText>
          <LegendText>盘后:0</LegendText>
          <LegendText>M5:33893</LegendText>
          <LegendText $c="#ee7a45">M10:30200</LegendText>
          <LegendText>换手率:<LegendText $c="#4aa8e0">5.92%</LegendText></LegendText>
        </PanelLegend>
      </ChartFrame>

      <ChartFrame $h={245} $mt={5}>
        <ChartSvg width="1050" height="241" viewBox="15 1830 1050 241">
          <line x1="15" x2="1065" y1="1951" y2="1951" stroke="#e6e6e6" strokeWidth="1.5" strokeDasharray="6 5" />
          {macdTops.map((top, i) => {
            if (top === 1999) return null;
            const up = top < 1999;
            return (
              <rect
                key={i}
                x={xAt(i) - 1.5}
                y={up ? top : 1999}
                width="3"
                height={Math.abs(1999 - top)}
                fill={up ? "#b83f47" : "#3f962f"}
              />
            );
          })}
          <Line pts={toPoints(macdDiff)} c="#2a2a2a" w={2.4} />
          <Line pts={toPoints(macdDea)} c="#ee7c45" w={2.8} />
        </ChartSvg>
        <PanelLegend $top={10}>
          <MacdButton>MACD(12,26,9)<Caret /></MacdButton>
          <Help>?</Help>
          <LegendText $c={RED} $s={36}>MACD:+0.13</LegendText>
          <LegendText $s={35} $ml={-4}>DIFF:+0.07</LegendText>
          <DarkLink>查看暗盘资金</DarkLink>
        </PanelLegend>
        <DeaText>DEA:+0.00</DeaText>
      </ChartFrame>
      <Band $h={10} $mt={10} />

      <InfoTabs>
        <ClippedTab><span>L2</span></ClippedTab>
        <span>看点</span>
        <span>资讯</span>
        <span>盘口</span>
        <span>资金</span>
        <span>社区</span>
        <ActiveInfoTab>简况(F10)</ActiveInfoTab>
      </InfoTabs>

      <BottomBar>
        <SectorCell>
          <UpTriangle />
          <SectorName>包装印刷</SectorName>
          <SectorPct>0.41%</SectorPct>
        </SectorCell>
        <BarItem>
          <BarIcon>
            <svg width="48" height="54" viewBox="0 0 48 54">
              <path d="M8 1.500h32a6 6 0 0 1 6 6V42l-10 10.500H8a6 6 0 0 1-6-6v-39a6 6 0 0 1 6-6z" fill="none" stroke="#ccc" strokeWidth="2.6" />
              <path d="M9 13h30M9 22h30M9 31h24M9 40h22" stroke="#ccc" strokeWidth="2.6" />
            </svg>
          </BarIcon>
          <BarLabel>下单</BarLabel>
        </BarItem>
        <BarItem>
          <BarIcon>
            <svg width="58" height="54" viewBox="0 0 58 54">
              <path d="M19 2h20" stroke="#ccc" strokeWidth="3" />
              <rect x="2" y="8" width="54" height="41" rx="8" fill="none" stroke="#ccc" strokeWidth="2.6" />
              <path d="M29 19v20M20 29h18" stroke="#ccc" strokeWidth="2.6" />
              <path d="M10 49l2 4h6l2-4M38 49l2 4h6l2-4" fill="none" stroke="#ccc" strokeWidth="2.6" />
            </svg>
          </BarIcon>
          <BarLabel>诊股</BarLabel>
        </BarItem>
        <BarItem>
          <BarIcon>
            <svg width="48" height="46" viewBox="0 0 48 46">
              <rect x="1.500" y="1.500" width="45" height="43" fill="none" stroke="#ccc" strokeWidth="2.6" />
              <path d="M12 22h24" stroke="#ccc" strokeWidth="2.6" />
            </svg>
          </BarIcon>
          <BarLabel>删自选</BarLabel>
        </BarItem>
        <BarItem>
          <BarIcon>
            <svg width="50" height="50" viewBox="0 0 50 50">
              <circle cx="25" cy="25" r="23.500" fill="none" stroke="#ccc" strokeWidth="2.6" />
              <path d="M13 17h24M13 32h24" stroke="#ccc" strokeWidth="2.6" />
            </svg>
          </BarIcon>
          <BarLabel>功能</BarLabel>
          <RedDot />
        </BarItem>
      </BottomBar>
      <HomeArea>
        <HomeHandle />
      </HomeArea>
    </Page>
  );
}
